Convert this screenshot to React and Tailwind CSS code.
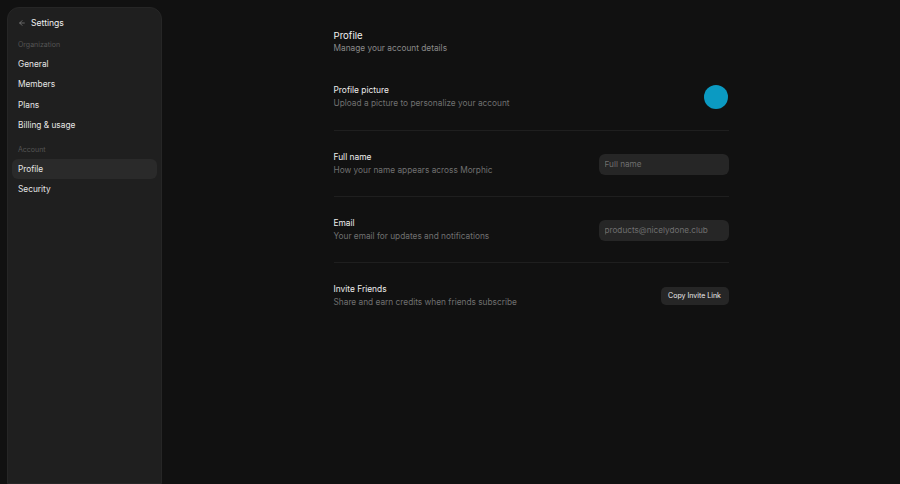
import { ArrowLeft } from 'lucide-react'

const org = ['General', 'Members', 'Plans', 'Billing & usage']
const account = ['Profile', 'Security']

function Row({ title, desc, children, last, first }) {
  return (
    <div
      className={`flex items-center justify-between pt-[20px] ${first ? 'pb-[20px]' : 'pb-[19px]'} ${last ? '' : 'border-b border-[#1f1f1f]'}`}
    >
      <div>
        <div className="text-[8.4px] leading-[13px] text-[#ededed]">{title}</div>
        <div className="text-[8.3px] leading-[13px] text-[#707070]">{desc}</div>
      </div>
      {children}
    </div>
  )
}

export default function App() {
  return (
    <div className="h-[484px] w-full bg-[#111111] flex font-['Inter',sans-serif] overflow-hidden">
      <aside className="w-[155px] ml-[7px] mt-[7px] bg-[#1f1f1f] border border-[#262626] rounded-t-[12px] px-[4px] pt-[8px] shrink-0">
        <div className="flex items-center gap-[5px] px-[6px] h-[14px]">
          <ArrowLeft className="w-[8px] h-[8px] text-[#8a8a8a]" strokeWidth={2} />
          <span className="text-[8.6px] text-[#f0f0f0]">Settings</span>
        </div>
        <div className="px-[6px] mt-[9px] h-[12px] flex items-center text-[7px] text-[#555555]">Organization</div>
        <div className="mt-[3px]">
          {org.map((item) => (
            <div key={item} className="px-[6px] h-[20.3px] flex items-center text-[8.3px] text-[#e6e6e6]">
              {item}
            </div>
          ))}
        </div>
        <div className="px-[6px] mt-[9px] h-[12px] flex items-center text-[7px] text-[#555555]">Account</div>
        <div className="mt-[3px]">
          {account.map((item) => (
            <div
              key={item}
              className={`px-[6px] h-[20px] flex items-center text-[8.3px] text-[#e6e6e6] rounded-[6px] ${item === 'Profile' ? 'bg-[#2a2a2a]' : ''}`}
            >
              {item}
            </div>
          ))}
        </div>
      </aside>

      <main className="flex-1 flex justify-center pt-[29px]">
        <div className="w-[395px]">
          <div className="text-[9.6px] leading-[13px] text-[#f0f0f0]">Profile</div>
          <div className="text-[8.3px] leading-[13px] text-[#8a8a8a]">Manage your account details</div>
          <div className="mt-[9px]">
            <Row title="Profile picture" desc="Upload a picture to personalize your account" first>
              <div className="w-[24px] h-[24px] rounded-full bg-[#0b9ac2] mr-[1px]" />
            </Row>
            <Row title="Full name" desc="How your name appears across Morphic">
              <input
                placeholder="Full name"
                className="w-[130px] h-[21px] rounded-[6px] bg-[#262626] px-[6px] text-[8.2px] text-[#e0e0e0] placeholder-[#6f6f6f] outline-none"
              />
            </Row>
            <Row title="Email" desc="Your email for updates and notifications">
              <input
                placeholder="products@nicelydone.club"
                className="w-[130px] h-[21px] rounded-[6px] bg-[#262626] px-[6px] text-[8.2px] text-[#e0e0e0] placeholder-[#6f6f6f] outline-none"
              />
            </Row>
            <Row title="Invite Friends" desc="Share and earn credits when friends subscribe" last>
              <button className="h-[18px] w-[68px] rounded-[5px] bg-[#262626] text-[7px] text-[#ececec]">
                Copy Invite Link
              </button>
            </Row>
          </div>
        </div>
      </main>
    </div>
  )
}
